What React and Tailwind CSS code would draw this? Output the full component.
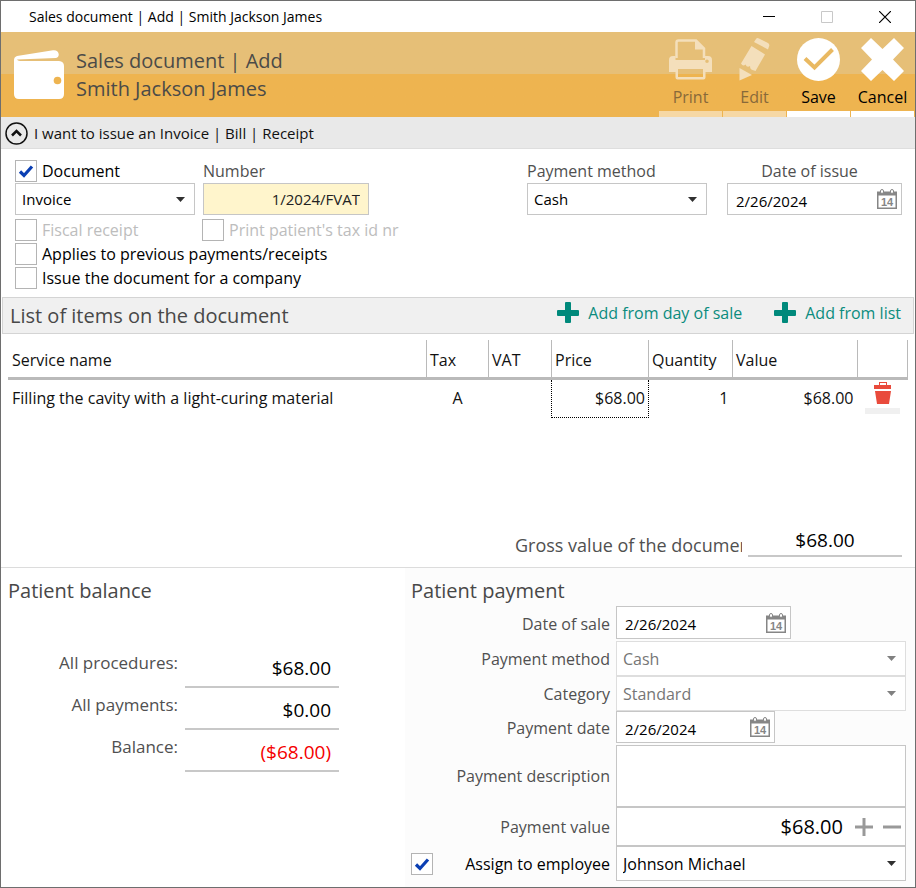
import React, { useState } from 'react';

const WalletIcon = () => (
  <svg className="w-[50px] h-[50px] shrink-0" viewBox="0 0 50 50" fill="#fff">
    <path d="M3 6 L39 .2 Q44 -.3 44.700 4 Q45 7.500 42 8 L3 9.500 Q4 11 8 11 H45 Q50 11.500 50 16 V44 Q50 49 45 49 H5 Q0 49 0 44 V10 Q0 7 3 6 Z" />
    <circle cx="43.500" cy="30.500" r="3.800" fill="#eeb450" />
  </svg>
);

const PrinterIcon = () => (
  <svg className="w-[43px] h-[43px]" viewBox="0 0 43 43" fill="none">
    <path d="M7.500 20 V4.500 Q7.500 2.500 9.500 2.500 H27 L35 10.500 V20" stroke="currentColor" strokeWidth="2.500" />
    <path d="M26 2 V11.500 H35 Z" fill="currentColor" />
    <path
      fillRule="evenodd"
      d="M4 18 H6.500 V22 H36 V18 H39 Q43 18 43 22 V34 H36.500 V39.500 Q36.500 41.500 34.500 41.500 H8.500 Q6.500 41.500 6.500 39.500 V34 H0 V22 Q0 18 4 18 Z M9 31 V39 H34 V31 Z M38 21.500 A1.800 1.800 0 1 0 38 25.100 A1.800 1.800 0 1 0 38 21.500 Z"
      fill="currentColor"
    />
  </svg>
);

const PencilIcon = () => (
  <svg className="w-[43px] h-[43px]" viewBox="0 0 43 43" fill="currentColor">
    <path d="M21 4 L23 1 Q24 -.5 26 .5 L35 5 Q37 6.500 36 8.500 L35 11.500 Z" />
    <path d="M18.500 8 L32 16.500 L22.500 33 L19.500 32 Q17 31.500 17 28 Q14 30 12.500 26.500 Q10 29 8 25.500 Z" />
    <path d="M6.500 30 L19 37 L6.500 42.500 Z" />
  </svg>
);

const SaveIcon = () => (
  <svg className="w-[43px] h-[43px]" viewBox="0 0 43 43">
    <circle cx="21.500" cy="21.500" r="21.500" fill="#fff" />
    <path d="M8 20.500 L17.500 29.500 L35.500 11.500" fill="none" stroke="#e9b962" strokeWidth="4" />
  </svg>
);

const CancelIcon = () => (
  <svg className="w-[43px] h-[43px]" viewBox="0 0 43 43" fill="#fff">
    <path d="M0 10 L10 0 L21.500 11 L33 0 L43 10 L32 21.500 L43 33 L33 43 L21.500 32 L10 43 L0 33 L11 21.500 Z" />
  </svg>
);

const CalendarIcon = () => (
  <svg className="w-5 h-5 shrink-0" viewBox="0 0 20 20">
    <path d="M0 2.500 H20 V20 H0 Z M1.500 6.500 V18.500 H18.500 V6.500 Z" fill="#868686" fillRule="evenodd" />
    <rect x="3.500" y=".5" width="3" height="4" rx="1.500" fill="#fff" stroke="#868686" />
    <rect x="13.500" y=".5" width="3" height="4" rx="1.500" fill="#fff" stroke="#868686" />
    <text x="10" y="17" textAnchor="middle" fontSize="11" fontWeight="bold" fontFamily="Liberation Sans, sans-serif" fill="#868686">
      14
    </text>
  </svg>
);

const PlusIcon = () => (
  <svg className="w-[22px] h-[22px]" viewBox="0 0 22 22" fill="#00897b">
    <path d="M8 1 Q8 0 9 0 H13 Q14 0 14 1 V8 H21 Q22 8 22 9 V13 Q22 14 21 14 H14 V20 Q14 21 13 21 H9 Q8 21 8 20 V14 H1 Q0 14 0 13 V9 Q0 8 1 8 H8 Z" />
  </svg>
);

const TrashIcon = () => (
  <svg className="w-[18px] h-[22px]" viewBox="0 0 18 22" fill="#e94b3c">
    <path fillRule="evenodd" d="M5 3 V0 H13 V3 H17 V7 H0 V3 Z M6 1 V3 H12 V1 Z" />
    <path d="M1 9 H17 L15 22 H3 Z" />
  </svg>
);

const Checkbox = ({ id, label, labelClass = 'text-black', ...props }) => (
  <div className="flex items-center gap-[5px]">
    <span className="grid shrink-0">
      <input
        id={id}
        type="checkbox"
        className="peer col-start-1 row-start-1 appearance-none w-[22px] h-[22px] border border-[#b4b4b4] bg-white"
        {...props}
      />
      <svg
        className="hidden peer-checked:block col-start-1 row-start-1 place-self-center w-4 h-4 pointer-events-none"
        viewBox="0 0 16 16"
      >
        <path d="M2 8.500 L6 12.500 L14 3.500" fill="none" stroke="#0b3fb3" strokeWidth="3.200" />
      </svg>
    </span>
    <label htmlFor={id} className={`whitespace-nowrap ${labelClass}`}>{label}</label>
  </div>
);

const Select = ({ id, options, className = 'h-8 text-[15px]', disabled }) => (
  <div className="grid w-full items-center">
    <select
      id={id}
      disabled={disabled}
      className={`col-start-1 row-start-1 appearance-none w-full border bg-white px-[6px] ${className} ${
        disabled ? 'border-[#dedede] text-[#767676]' : 'border-[#c6c6c6] text-black'
      }`}
    >
      {options.map((option) => (
        <option key={option}>{option}</option>
      ))}
    </select>
    <svg
      className={`col-start-1 row-start-1 justify-self-end mr-[10px] w-[9px] h-[5px] pointer-events-none ${
        disabled ? 'text-[#808080]' : 'text-[#303030]'
      }`}
      viewBox="0 0 9 5"
    >
      <path d="M0 0 H9 L4.500 5 Z" fill="currentColor" />
    </svg>
  </div>
);

const DateField = ({ id, value, className, label }) => {
  const [date, setDate] = useState(value);

  return (
    <div className={`flex items-center border border-[#c6c6c6] bg-white pr-1 ${className}`}>
      <input
        id={id}
        value={date}
        onChange={(e) => setDate(e.target.value)}
        className="min-w-0 flex-1 px-2 pt-1 text-[15px] text-black outline-none"
      />
      <button type="button" aria-label={label}>
        <CalendarIcon />
      </button>
    </div>
  );
};

const ToolButton = ({ icon: Icon, label, disabled }) => (
  <button
    type="button"
    disabled={disabled}
    className={`flex w-[63px] flex-col items-center border-b-[6px] pt-[6px] ${
      disabled ? 'border-[#f6d8a5] text-[#f4dfbb]' : 'border-white text-white'
    }`}
  >
    <Icon />
    <span className={`flex h-[30px] items-center pt-[2px] text-[16px] ${disabled ? 'text-[#88693a]' : 'text-black'}`}>
      {label}
    </span>
  </button>
);

const columns = [
  { label: 'Tax', width: 'w-[62px]' },
  { label: 'VAT', width: 'w-[63px]' },
  { label: 'Price', width: 'w-[97px]' },
  { label: 'Quantity', width: 'w-[84px]' },
  { label: 'Value', width: 'w-[125px]' },
];

const balances = [
  { label: 'All procedures:', value: '$68.00', color: 'text-black' },
  { label: 'All payments:', value: '$0.00', color: 'text-black' },
  { label: 'Balance:', value: '($68.00)', color: 'text-[#f50000]' },
];

const TitleBar = () => (
  <div className="flex h-[31px] items-center justify-between pl-7 pr-6">
    <span className="text-[14px] text-black">Sales document | Add | Smith Jackson James</span>
    <div className="flex items-center gap-[46px]">
      <button type="button" aria-label="Minimize">
        <svg className="w-3 h-3" viewBox="0 0 12 12"><path d="M0 5.500 H12" stroke="#000" /></svg>
      </button>
      <button type="button" aria-label="Maximize" disabled>
        <svg className="w-3 h-3" viewBox="0 0 12 12"><path d="M.5 .5 H11.500 V11.500 H.5 Z" fill="none" stroke="#c8c8c8" /></svg>
      </button>
      <button type="button" aria-label="Close">
        <svg className="w-3 h-3" viewBox="0 0 12 12"><path d="M0 0 L12 12 M12 0 L0 12" stroke="#000" strokeWidth="1.200" /></svg>
      </button>
    </div>
  </div>
);

const DocumentForm = () => (
  <section className="flex justify-between pt-[9px] pl-[14px] pr-[13px] pb-[7px] text-[16px]">
    <div>
      <div className="grid grid-cols-[180px_166px] gap-x-2">
        <Checkbox id="document" label="Document" defaultChecked />
        <label htmlFor="number" className="flex h-[25px] items-center text-[#505050]">Number</label>
        <Select id="document-type" options={['Invoice', 'Bill', 'Receipt']} />
        <input
          id="number"
          defaultValue="1/2024/FVAT"
          className="h-8 w-full border border-[#c6c6c6] bg-[#fff5cc] px-2 text-right text-[15px] text-[#222]"
        />
      </div>
      <div className="mt-[3px] grid grid-cols-[180px_auto] gap-x-[7px]">
        <Checkbox id="fiscal" label="Fiscal receipt" labelClass="text-[#bdbdbd]" disabled />
        <Checkbox id="tax-id" label="Print patient's tax id nr" labelClass="text-[#bdbdbd]" disabled />
      </div>
      <Checkbox id="previous" label="Applies to previous payments/receipts" />
      <Checkbox id="company" label="Issue the document for a company" />
    </div>
    <div className="flex items-start gap-5">
      <div className="w-[180px]">
        <label htmlFor="method" className="flex h-[25px] items-center text-[#505050]">Payment method</label>
        <Select id="method" options={['Cash', 'Card', 'Transfer']} />
      </div>
      <div className="w-[175px]">
        <label htmlFor="issue-date" className="flex h-[25px] items-center justify-center pr-[10px] text-[#505050]">
          Date of issue
        </label>
        <DateField id="issue-date" value="2/26/2024" label="Pick date of issue" className="h-8" />
      </div>
    </div>
  </section>
);

const ItemsSection = () => (
  <section className="border-b border-[#dcdcdc]">
    <div className="mx-px flex h-[37px] items-center justify-between border border-[#d4d4d4] bg-[#f0f0f0] pl-[7px] pr-3">
      <h2 className="text-[20px] text-[#484848]">List of items on the document</h2>
      <div className="flex gap-8 pb-[6px] text-[16px] text-[#0b8c7e]">
        <button type="button" className="flex items-center gap-[9px]">
          <PlusIcon />
          Add from day of sale
        </button>
        <button type="button" className="flex items-center gap-[9px]">
          <PlusIcon />
          Add from list
        </button>
      </div>
    </div>

    <div className="min-h-[187px] pl-[7px] pr-[7px] pt-[6px]">
      <table className="w-full table-fixed border-collapse text-[16px] text-[#111]">
        <thead>
          <tr className="h-[38px] border-b-[3px] border-[#bababa] text-left">
            <th className="border-r border-[#bababa] pt-1 pl-1 font-normal">Service name</th>
            {columns.map((column) => (
              <th key={column.label} className={`${column.width} border-r border-[#bababa] pt-1 pl-[3px] font-normal`}>
                {column.label}
              </th>
            ))}
            <th className="w-[50px] border-r border-[#bababa]" aria-label="Actions" />
          </tr>
        </thead>
        <tbody>
          <tr className="h-[39px]">
            <td className="pl-1">Filling the cavity with a light-curing material</td>
            <td className="text-center">A</td>
            <td />
            <td className="border border-dotted border-black pr-[3px] text-right">$68.00</td>
            <td className="pr-1 text-right">1</td>
            <td className="pr-1 text-right">$68.00</td>
            <td>
              <button
                type="button"
                aria-label="Remove item"
                className="mx-auto flex h-8 w-[35px] justify-center border-b-[6px] border-[#f0f0f0]"
              >
                <TrashIcon />
              </button>
            </td>
          </tr>
        </tbody>
      </table>
    </div>

    <div className="flex items-start justify-end gap-[6px] pr-[13px] pb-[10px]">
      <span className="w-[227px] overflow-hidden whitespace-nowrap pt-3 text-[18px] leading-6 text-[#505050]">
        Gross value of the document
      </span>
      <output className="h-9 w-[154px] border-b-2 border-[#c8c8c8] pt-[3px] text-center text-[19px] leading-8 text-black">
        $68.00
      </output>
    </div>
  </section>
);

const PatientBalance = () => (
  <section className="w-[404px] shrink-0 pl-[7px] pt-2">
    <h2 className="text-[20px] text-[#484848]">Patient balance</h2>
    <dl className="mt-10 flex flex-col">
      {balances.map((balance) => (
        <div key={balance.label} className="flex h-[42px] gap-[7px]">
          <dt className="w-[170px] pt-1 text-right text-[17px] text-[#505050]">{balance.label}</dt>
          <dd className={`w-[154px] border-b-2 border-[#c8c8c8] pr-2 pt-2 text-right text-[19px] ${balance.color}`}>
            {balance.value}
          </dd>
        </div>
      ))}
    </dl>
  </section>
);

const PaymentRow = ({ id, label, children }) => (
  <>
    <label htmlFor={id} className="self-center text-right">{label}</label>
    {children}
  </>
);

const PatientPayment = () => (
  <section className="min-w-0 flex-1 bg-[#fcfcfc] pt-2 pl-[6px] pr-[9px] pb-[6px]">
    <h2 className="text-[20px] text-[#484848]">Patient payment</h2>
    <div className="grid grid-cols-[199px_minmax(0,1fr)] gap-x-[6px] text-[16px] text-[#505050]">
      <PaymentRow id="sale-date" label="Date of sale">
        <DateField id="sale-date" value="2/26/2024" label="Pick date of sale" className="mb-[2px] h-[33px] w-[175px]" />
      </PaymentRow>
      <PaymentRow id="payment-method" label="Payment method">
        <Select id="payment-method" options={['Cash']} className="h-[35px] text-[16px]" disabled />
      </PaymentRow>
      <PaymentRow id="category" label="Category">
        <Select id="category" options={['Standard']} className="h-[35px] text-[16px]" disabled />
      </PaymentRow>
      <PaymentRow id="payment-date" label="Payment date">
        <DateField id="payment-date" value="2/26/2024" label="Pick payment date" className="mb-[2px] h-8 w-[159px]" />
      </PaymentRow>
      <PaymentRow id="description" label="Payment description">
        <textarea id="description" className="block h-[62px] w-full resize-none border border-[#c6c6c6] bg-white" />
      </PaymentRow>
      <PaymentRow id="payment-value" label="Payment value">
        <div className="flex h-[39px] items-center border border-[#c6c6c6] bg-white pr-1">
          <input
            id="payment-value"
            defaultValue="$68.00"
            className="min-w-0 flex-1 text-right text-[20px] text-black outline-none"
          />
          <div className="ml-3 flex gap-[10px]">
            <button type="button" aria-label="Increase">
              <svg className="w-[18px] h-[18px]" viewBox="0 0 18 18"><path d="M0 9 H18 M9 0 V18" stroke="#999" strokeWidth="3" /></svg>
            </button>
            <button type="button" aria-label="Decrease">
              <svg className="w-[18px] h-[18px]" viewBox="0 0 18 18"><path d="M0 9 H18" stroke="#999" strokeWidth="3" /></svg>
            </button>
          </div>
        </div>
      </PaymentRow>
      <div className="flex items-center [&>div]:w-full [&_label]:flex-1 [&_label]:text-right">
        <Checkbox id="assign" label="Assign to employee" defaultChecked />
      </div>
      <Select id="employee" options={['Johnson Michael']} className="h-[35px] text-[16px]" />
    </div>
  </section>
);

const App = () => {
  return (
    <div className="min-h-screen border border-[#6e6e6e] bg-white font-['Open_Sans',sans-serif]">
      <TitleBar />

      <header className="flex h-[85px] justify-between bg-linear-to-b from-[#e6bf77] from-50% to-[#eeb450] to-50% pl-[13px] pr-px">
        <div className="flex items-center gap-3">
          <WalletIcon />
          <h1 className="text-[20px] leading-7 text-[#4b4b48]">
            Sales document | Add
            <br />
            Smith Jackson James
          </h1>
        </div>
        <div className="flex gap-px">
          <ToolButton icon={PrinterIcon} label="Print" disabled />
          <ToolButton icon={PencilIcon} label="Edit" disabled />
          <ToolButton icon={SaveIcon} label="Save" />
          <ToolButton icon={CancelIcon} label="Cancel" />
        </div>
      </header>

      <button
        type="button"
        className="flex h-8 w-full items-center gap-[6px] border-b border-[#dedede] bg-[#e9e9e9] pl-1 pt-px text-[15px] text-[#111]"
      >
        <svg className="w-[23px] h-[23px]" viewBox="0 0 23 23" fill="none" stroke="#111">
          <circle cx="11.500" cy="11.500" r="10.500" strokeWidth="1.500" />
          <path d="M7 13.500 L11.500 9 L16 13.500" strokeWidth="2.500" />
        </svg>
        I want to issue an Invoice | Bill | Receipt
      </button>

      <DocumentForm />
      <ItemsSection />

      <div className="flex">
        <PatientBalance />
        <PatientPayment />
      </div>
    </div>
  );
};

export default App;
